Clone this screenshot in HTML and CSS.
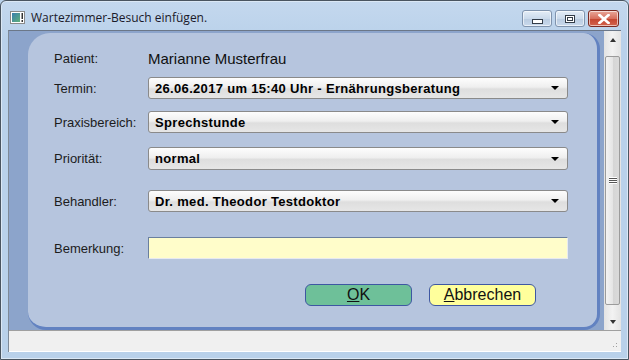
FILE: index.html
```html
<!DOCTYPE html>
<html lang="de">
<head>
<meta charset="utf-8">
<title>Wartezimmer-Besuch einfügen.</title>
<link rel="stylesheet" href="styles.css">
</head>
<body>
<div class="window">
  <div class="titlebar">
    <svg class="appicon" width="15" height="13" viewBox="0 0 15 13">
      <rect x="0.5" y="0.5" width="14" height="12" fill="#fff" stroke="#8a8a8a"/>
      <rect x="2" y="2" width="8" height="9" fill="url(#g)"/>
      <rect x="11.5" y="2" width="1.5" height="6" fill="#333"/>
      <rect x="11.5" y="9" width="1.5" height="2" fill="#333"/>
      <defs><linearGradient id="g" x1="0" y1="0" x2="1" y2="1"><stop offset="0" stop-color="#3a7fb0"/><stop offset="1" stop-color="#5fb07a"/></linearGradient></defs>
    </svg>
    <span class="title">Wartezimmer-Besuch einfügen.</span>
    <div class="caption-btns">
      <div class="cbtn"><span class="min-glyph"></span></div>
      <div class="cbtn"><span class="max-glyph"></span></div>
      <div class="cbtn close">
        <svg width="12" height="10" viewBox="0 0 12 10"><path d="M1.5 1 L10.5 9 M10.5 1 L1.5 9" stroke="#fff" stroke-width="2.6" stroke-linecap="square"/></svg>
      </div>
    </div>
  </div>
  <div class="client">
    <div class="main">
      <div class="backdrop">
        <div class="panel">
          <div class="row r-patient">
            <div class="label">Patient:</div>
            <div class="patient-name">Marianne Musterfrau</div>
          </div>
          <div class="row r-termin">
            <div class="label">Termin:</div>
            <div class="select"><span>26.06.2017 um 15:40 Uhr - Ernährungsberatung</span><i class="arrow"></i></div>
          </div>
          <div class="row r-praxis">
            <div class="label">Praxisbereich:</div>
            <div class="select"><span>Sprechstunde</span><i class="arrow"></i></div>
          </div>
          <div class="row r-prio">
            <div class="label">Priorität:</div>
            <div class="select"><span>normal</span><i class="arrow"></i></div>
          </div>
          <div class="row r-behandler">
            <div class="label">Behandler:</div>
            <div class="select"><span>Dr. med. Theodor Testdoktor</span><i class="arrow"></i></div>
          </div>
          <div class="row r-bem">
            <div class="label">Bemerkung:</div>
            <div class="textinput"></div>
          </div>
          <div class="row r-buttons">
            <div class="btn ok"><u>O</u>K</div>
            <div class="btn cancel"><u>A</u>bbrechen</div>
          </div>
        </div>
      </div>
      <div class="scrollbar">
        <div class="sb-arrow"><i class="up"></i></div>
        <div class="sb-thumb"><span class="grip"></span></div>
        <div class="sb-arrow"><i class="down"></i></div>
      </div>
    </div>
    <div class="statusbar"><span class="sizegrip"></span></div>
  </div>
</div>
</body>
</html>
```
FILE: styles.css
```css
html, body {
  margin: 0;
  padding: 0;
  background: #b9d1ea;
}
.window {
  box-sizing: border-box;
  width: 629px;
  height: 360px;
  background: linear-gradient(#c4d8ee, #b9d1ea 40px);
  border: 1px solid #4a5560;
  border-radius: 6px 6px 0 0;
  display: flex;
  flex-direction: column;
  font-family: "Liberation Sans", Arial, sans-serif;
  box-shadow: inset 0 0 0 1px #dbe8f5;
}
.titlebar {
  height: 29px;
  display: flex;
  align-items: center;
  padding-left: 9px;
  position: relative;
}
.appicon { margin-top: 4px; }
.title {
  font-family: "Open Sans", "Noto Sans", sans-serif;
  font-size: 12px;
  color: #1a1a2a;
  margin-left: 6px;
  margin-top: 4px;
}
.caption-btns {
  margin-left: auto;
  margin-right: 9px;
  margin-top: 6px;
  display: flex;
  gap: 3px;
}
.cbtn {
  box-sizing: border-box;
  width: 30px;
  height: 17px;
  border: 1px solid #7f93ad;
  border-radius: 3px;
  background: linear-gradient(#e4edf7, #cbdaeb 50%, #b9cbe0 51%, #c9d9ec);
  display: flex;
  align-items: center;
  justify-content: center;
  box-shadow: inset 0 0 0 1px rgba(255,255,255,0.6);
}
.cbtn.close {
  width: 31px;
  border-color: #7a2a22;
  background: linear-gradient(#e9a89a, #d8705e 50%, #c4442f 51%, #d2644e);
}
.min-glyph {
  width: 9px;
  height: 3px;
  background: #fff;
  border: 1px solid #333c48;
  margin-top: 5px;
}
.max-glyph {
  box-sizing: border-box;
  width: 10px;
  height: 8px;
  border: 1px solid #333c48;
  background: #fff;
  box-shadow: inset 0 0 0 1px #fff, inset 0 0 0 2px #333c48;
}
.client {
  flex: 1;
  margin: 0 7px 7px 7px;
  display: flex;
  flex-direction: column;
  border-top: 1px solid #6b7788;
  border-left: 1px solid #7e8a98;
}
.main {
  flex: 1;
  display: flex;
  min-height: 0;
}
.backdrop {
  flex: 1;
  background: #8ca4cb;
  padding: 2px 4px 0 19px;
  display: flex;
}
.panel {
  flex: 1;
  background: #b6c5de;
  border-radius: 22px 16px 16px 18px;
  border-right: 3px solid #6282c1;
  border-bottom: 3px solid #6282c1;
  padding: 14px 0 0 26px;
  display: flex;
  flex-direction: column;
}
.row {
  display: flex;
  align-items: center;
  height: 22px;
}
.label {
  width: 94px;
  font-size: 13px;
  color: #1c1c1c;
}
.patient-name {
  font-size: 15px;
  color: #101010;
}
.r-termin { margin-top: 8px; }
.r-praxis { margin-top: 12px; }
.r-prio { margin-top: 14px; height: 23px; }
.r-behandler { margin-top: 20px; }
.r-bem { margin-top: 25px; }
.r-buttons { margin-top: 25px; padding-left: 251px; gap: 17px; }
.select {
  box-sizing: border-box;
  width: 420px;
  height: 100%;
  border: 1px solid #8a8a8a;
  border-radius: 3px;
  background: linear-gradient(#fdfdfd, #efefef 45%, #dedede 55%, #e6e6e6);
  display: flex;
  align-items: center;
  padding: 0 6px;
  font-weight: bold;
  font-size: 13px;
  letter-spacing: 0.32px;
  color: #000;
}
.select .arrow {
  margin-left: auto;
  margin-right: 2px;
  width: 0;
  height: 0;
  border-left: 4px solid transparent;
  border-right: 4px solid transparent;
  border-top: 4px solid #000;
}
.textinput {
  box-sizing: border-box;
  width: 420px;
  height: 100%;
  background: #fffdca;
  border-top: 1px solid #6a7f9e;
  border-left: 1px solid #6a7f9e;
  border-right: 1px solid #e8eaf0;
  border-bottom: 1px solid #e8eaf0;
}
.btn {
  box-sizing: border-box;
  width: 107px;
  height: 22px;
  border: 1px solid #3e57a2;
  border-radius: 6px;
  display: flex;
  align-items: center;
  justify-content: center;
  font-size: 16px;
  color: #111;
}
.btn.ok { background: #6ec099; }
.btn.cancel { background: #ffff9c; }
.scrollbar {
  width: 17px;
  background: linear-gradient(90deg, #e3e3e3, #f2f2f2 50%, #e3e3e3);
  display: flex;
  flex-direction: column;
  padding: 0 1px;
  box-sizing: border-box;
}
.sb-arrow {
  height: 17px;
  display: flex;
  align-items: center;
  justify-content: center;
}
.sb-arrow i {
  width: 0;
  height: 0;
  border-left: 3.5px solid transparent;
  border-right: 3.5px solid transparent;
}
.sb-arrow .up { border-bottom: 4px solid #333; }
.sb-arrow .down { border-top: 4px solid #333; }
.sb-thumb {
  flex: 1;
  margin: 8px 0 8px 0;
  border: 1px solid #9b9b9b;
  border-radius: 2px;
  background: linear-gradient(90deg, #f3f3f3, #e5e5e5 50%, #d5d5d5 51%, #dadada);
  display: flex;
  align-items: center;
  justify-content: center;
}
.grip {
  width: 8px;
  height: 7px;
  background: repeating-linear-gradient(#fff 0 1px, #555 1px 2px);
}
.statusbar {
  height: 20px;
  background: #f0f0f0;
  border-top: 1px solid #a0a0a0;
  border-bottom: 1px solid #fff;
  position: relative;
}
.sizegrip {
  position: absolute;
  right: 2px;
  bottom: 2px;
  width: 10px;
  height: 10px;
  background: radial-gradient(circle, #a0a0a0 0.8px, transparent 1px) 0 0 / 3px 3px;
  clip-path: polygon(100% 0, 100% 100%, 0 100%);
}
```
